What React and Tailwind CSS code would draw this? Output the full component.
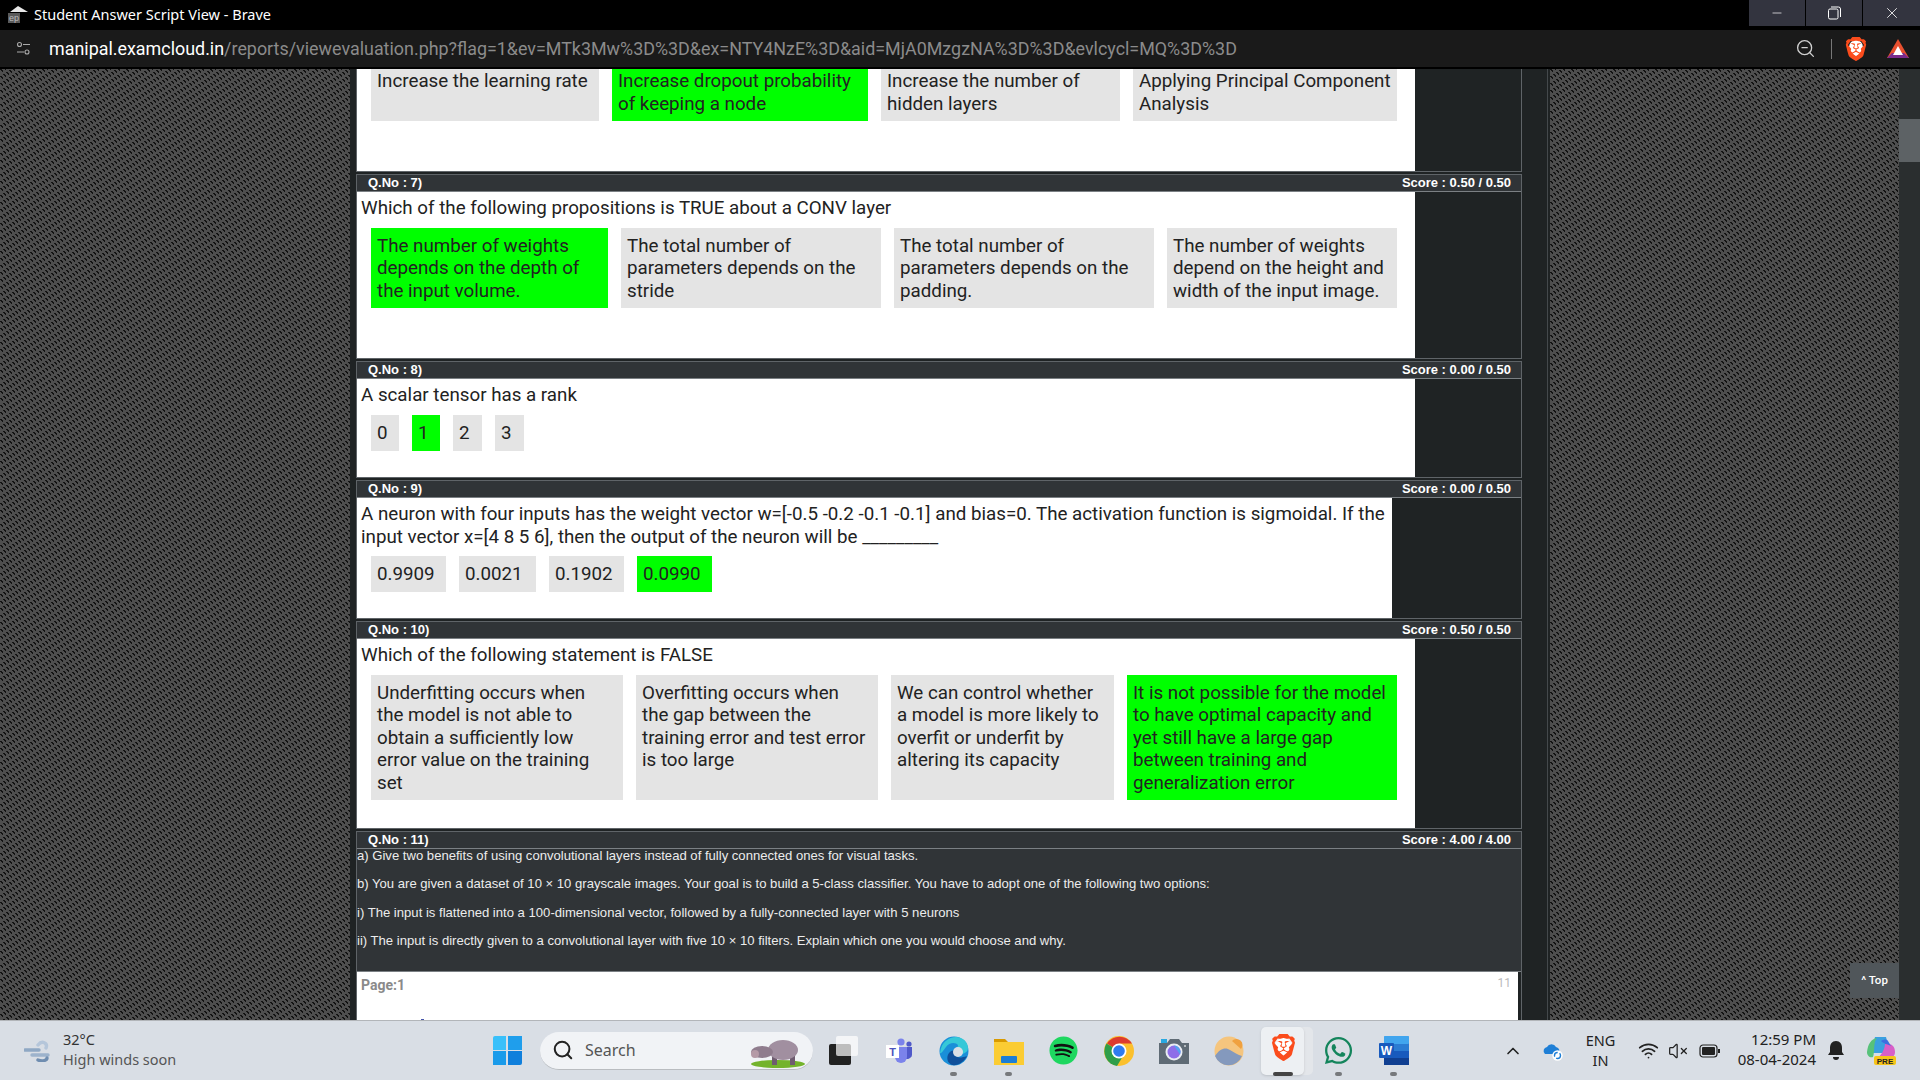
import React from 'react'
import { Search, ChevronUp, Wifi, VolumeX, ZoomOut, Minus, X } from 'lucide-react'
import { FaSpotify, FaWhatsapp } from 'react-icons/fa'
import { SiBrave } from 'react-icons/si'

// short dark dashes repeated on a skewed lattice, gives the woven page background
const DASH = [[0, 0], [1, 0], [1, 1], [2, 1], [2, 2]]
const TILE = []
for (let i = 0; i < 21; i++) {
  const ox = i * 3
  const oy = i * -2 + (i % 3) * 7
  DASH.forEach(([x, y]) => TILE.push([(ox + x) % 21, (((oy + y) % 21) + 21) % 21]))
}

function Weave({ id }) {
  return (
    <svg className="block w-full h-full">
      <defs>
        <pattern id={id} width="21" height="21" patternUnits="userSpaceOnUse">
          <rect width="21" height="21" fill="#4e4e4e" />
          {TILE.map(([x, y], i) => (
            <rect key={i} x={x} y={y} width="1" height="1" fill="#121212" />
          ))}
        </pattern>
      </defs>
      <rect width="100%" height="100%" fill={`url(#${id})`} />
    </svg>
  )
}

function BraveIcon({ size }) {
  return (
    <span className="relative inline-flex items-center justify-center" style={{ width: size, height: size }}>
      <span className="absolute left-[20%] right-[20%] top-[15%] bottom-[20%] bg-white rounded-full" />
      <SiBrave className="relative" color="#fb4c1c" size={size} />
    </span>
  )
}

function BatIcon() {
  return (
    <svg width="24" height="22" viewBox="0 0 24 22">
      <polygon points="12,1 23,20 1,20" fill="#e8502f" />
      <polygon points="1,20 23,20 18,15 6,15" fill="#7a2b8c" />
      <polygon points="12,8 17,17 7,17" fill="#fff" />
    </svg>
  )
}

function Option({ w, h = 'h-[80px]', on, children, cls = 'px-[6px] pt-[7px]' }) {
  return (
    <div className={`${w} ${h} ${cls} shrink-0 ${on ? 'bg-[#00ff00]' : 'bg-[#e4e4e4]'} text-[#222]`}>{children}</div>
  )
}

function Section({ q, score, white = 'w-[1058px]', body, children }) {
  return (
    <div className="mt-[2px] border border-[#5f6468]">
      <div className="h-[16px] bg-[#303437] flex items-center justify-between pl-[11px] pr-[10px] text-[13px] font-bold text-white font-['Liberation_Sans',sans-serif]">
        <span>Q.No : {q})</span>
        <span>{score}</span>
      </div>
      <div className="h-px bg-[#7b8084]" />
      <div className={`${white} ${body} bg-white pt-[5px]`}>{children}</div>
    </div>
  )
}

function Prompt({ children }) {
  return <div className="px-[4px] text-[#222]">{children}</div>
}

function Row({ children }) {
  return <div className="flex gap-[13px] pl-[14px] mt-[8px]">{children}</div>
}

function TaskItem({ dot, children }) {
  return (
    <div className="relative w-[55px] h-[48px] flex items-center justify-center shrink-0">
      {children}
      {dot && <span className="absolute bottom-[-1px] left-[24px] w-[7px] h-[4px] rounded-full bg-[#77797c]" />}
    </div>
  )
}

function Taskbar() {
  return (
    <div className="h-[60px] shrink-0 border-t border-[#b2b5b9] bg-[#d9dee5] flex items-center font-['Noto_Sans',sans-serif] text-[#222]">
      <div className="w-[484px] pl-[24px] flex items-center shrink-0">
        <svg width="28" height="22" viewBox="0 0 28 22" fill="none" strokeLinecap="round" strokeWidth="3.4">
          <path d="M1 10h14" stroke="#8fa8c4" />
          <path d="M8 15h16" stroke="#9db3cc" />
          <path d="M14 5c4-5 10-2 8 3" stroke="#b5c6da" />
          <path d="M14 20c5 2 9 0 9-2" stroke="#6f8db0" />
        </svg>
        <div className="ml-[11px] -mt-[4px] text-[14.5px] leading-[20px] text-[#333]">
          <div>32°C</div>
          <div className="text-[#555]">High winds soon</div>
        </div>
      </div>
      <div className="w-[46px] flex justify-center shrink-0">
        <div className="grid grid-cols-2 gap-[1.5px] w-[29px] h-[29px]">
          <span className="bg-[#39c0fa] rounded-tl-[2px]" />
          <span className="bg-[#1f9eec]" />
          <span className="bg-[#1a9bea]" />
          <span className="bg-[#0f7fdc] rounded-br-[2px]" />
        </div>
      </div>
      <div className="relative ml-[10px] w-[273px] h-[38px] shrink-0 rounded-full bg-[#f1f3f6] border-b border-[#b9bcc0] flex items-center pl-[12px]">
        <Search size={22} strokeWidth={2.2} className="text-[#222]" />
        <span className="ml-[11px] text-[16px] text-[#555]">Search</span>
        <svg className="absolute right-[7px] top-[6px]" width="56" height="30" viewBox="0 0 56 30">
          <ellipse cx="28" cy="26" rx="27" ry="4" fill="#74b32c" />
          <rect x="22" y="17" width="5" height="10" fill="#6f5c70" />
          <rect x="40" y="17" width="5" height="10" fill="#6f5c70" />
          <ellipse cx="33" cy="12" rx="15" ry="10" fill="#a18fa0" />
          <ellipse cx="12" cy="14" rx="11" ry="6" fill="#8f7c8d" />
          <circle cx="5" cy="16" r="4" fill="#b59aa6" />
        </svg>
      </div>
      <div className="ml-[3px] flex items-center shrink-0">
        <TaskItem>
          <span className="relative w-[29px] h-[29px]">
            <span className="absolute left-0 bottom-0 w-[22px] h-[21px] bg-[#222] rounded-[2px]" />
            <span className="absolute right-0 top-0 w-[22px] h-[20px] bg-white/70 rounded-[2px]" />
          </span>
        </TaskItem>
        <TaskItem>
          <svg width="28" height="26" viewBox="0 0 28 26">
            <circle cx="16" cy="4" r="3.6" fill="#7b83eb" />
            <circle cx="24" cy="6" r="2.6" fill="#5059c9" />
            <path d="M19 9h8v8a5 5 0 0 1-8 3z" fill="#5059c9" />
            <path d="M10 9h12v10a6 6 0 0 1-12 0z" fill="#7b83eb" />
            <rect x="1" y="7" width="13" height="13" fill="#fff" />
            <text x="7.5" y="17.5" fontSize="11" fontWeight="700" textAnchor="middle" fill="#4b53bc" fontFamily="Liberation Sans">T</text>
          </svg>
        </TaskItem>
        <TaskItem dot>
          <svg width="30" height="30" viewBox="0 0 30 30">
            <circle cx="15" cy="15" r="14.5" fill="#1a8fd8" />
            <path d="M1 17C2 6 10 1 17 1c7 0 12 5 12 11 0 4-4 6-8 6-3 0-5-1-5-3 0-3 3-3 3-6-2-3-9-3-12 2-3 4-5 7-6 6z" fill="#36c8d8" />
            <path d="M13 29c-5-2-6-8-3-12 2-3 5-3 6-2-2 4 1 9 12 5-3 6-9 10-15 9z" fill="#0f4f9a" />
            <circle cx="19" cy="16" r="5" fill="#d9dee5" />
          </svg>
        </TaskItem>
        <TaskItem dot>
          <svg width="30" height="28" viewBox="0 0 30 28">
            <path d="M0 2h11l3 3h-14z" fill="#d99a00" />
            <rect x="0" y="5" width="30" height="23" fill="#ffd23f" />
            <rect x="0" y="5" width="30" height="23" fill="#f9c82b" opacity="0.6" />
            <rect x="7" y="19" width="16" height="7" rx="1" fill="#1c7ed6" />
          </svg>
        </TaskItem>
        <TaskItem>
          <span className="relative flex items-center justify-center w-[29px] h-[29px]">
            <span className="absolute inset-[3px] rounded-full bg-[#111]" />
            <FaSpotify className="relative" size={29} color="#1ed760" />
          </span>
        </TaskItem>
        <TaskItem>
          <svg width="30" height="30" viewBox="0 0 30 30">
            <circle cx="15" cy="15" r="15" fill="#fbc02d" />
            <path d="M15 15L3 7.5A15 15 0 0 1 28 7.5H15z" fill="#dd3b2f" />
            <path d="M15 15L2.5 7.5A15 15 0 0 0 13 30l6-10z" fill="#2f9e4a" />
            <circle cx="15" cy="15" r="7.5" fill="#fff" />
            <circle cx="15" cy="15" r="5.8" fill="#2f7bf0" />
          </svg>
        </TaskItem>
        <TaskItem>
          <svg width="30" height="26" viewBox="0 0 30 26">
            <rect x="2" y="1" width="6" height="4" fill="#29a8e0" />
            <path d="M0 5h8l3-4h9l3 4h7v21H0z" fill="#5f6b75" />
            <circle cx="15" cy="14" r="8.5" fill="#e9edf2" />
            <circle cx="15" cy="14" r="6.5" fill="#8e6ee8" />
            <path d="M15 7.5a6.5 6.5 0 0 1 6 9z" fill="#52a3f0" />
            <circle cx="26" cy="8" r="1" fill="#cfd4d9" />
          </svg>
        </TaskItem>
        <TaskItem>
          <svg width="30" height="30" viewBox="0 0 30 30">
            <circle cx="15" cy="15" r="14.5" fill="#f5c57e" />
            <path d="M18 5a5 5 0 0 1 9 8z" fill="#f0a13f" />
            <path d="M1 20c5-8 11-9 15-6 4 2 8 5 12 6a14.5 14.5 0 0 1-27 0z" fill="#8499bd" />
          </svg>
        </TaskItem>
        <TaskItem>
          <span className="absolute left-[9px] top-0 w-[48px] h-[48px] rounded-[5px] bg-[#e3e6ea]" />
          <span className="absolute left-[5px] top-0 w-[43px] h-[48px] rounded-[5px] bg-[#edf0f3] shadow-sm" />
          <span className="relative">
            <BraveIcon size={27} />
          </span>
          <span className="absolute bottom-[-1px] left-[17px] w-[20px] h-[4px] rounded-full bg-[#444]" />
        </TaskItem>
        <TaskItem dot>
          <FaWhatsapp size={31} color="#14855c" />
        </TaskItem>
        <TaskItem dot>
          <svg width="30" height="29" viewBox="0 0 30 29">
            <rect x="5" y="0" width="25" height="29" rx="2" fill="#2b7cd3" />
            <rect x="5" y="0" width="25" height="8" rx="1" fill="#41a5ee" />
            <rect x="5" y="15" width="25" height="7" fill="#185abd" />
            <rect x="5" y="22" width="25" height="7" fill="#103f91" />
            <rect x="0" y="7" width="15" height="15" rx="1" fill="#185abd" />
            <text x="7.5" y="19" fontSize="12" fontWeight="700" textAnchor="middle" fill="#fff" fontFamily="Liberation Sans">W</text>
          </svg>
        </TaskItem>
      </div>
      <ChevronUp size={20} strokeWidth={2} className="ml-[82px] shrink-0" />
      <svg className="ml-[20px] shrink-0" width="20" height="20" viewBox="0 0 20 20">
        <path d="M2 13a4 4 0 0 1 2-7 5 5 0 0 1 9 0 4 4 0 0 1 2 7z" fill="#1f7fd6" />
        <circle cx="14.5" cy="14.5" r="5.2" fill="#fff" />
        <circle cx="14.5" cy="14.5" r="3" fill="none" stroke="#1f7fd6" strokeWidth="1.4" strokeDasharray="6 2" />
      </svg>
      <div className="ml-[23px] -mt-[2px] w-[29px] shrink-0 text-center text-[14.5px] leading-[20px] flex flex-col items-center">
        <div>ENG</div>
        <div>IN</div>
      </div>
      <Wifi size={21} className="ml-[23px] shrink-0" />
      <VolumeX size={20} strokeWidth={1.5} className="ml-[9px] shrink-0" />
      <svg className="ml-[11px] shrink-0" width="21" height="14" viewBox="0 0 21 14">
        <rect x="1" y="1" width="17" height="12" rx="3" fill="none" stroke="#222" strokeWidth="1.2" />
        <rect x="3" y="3" width="13" height="8" rx="1" fill="#222" />
        <rect x="19" y="5" width="2" height="4" fill="#222" />
      </svg>
      <div className="w-[96px] -mt-[4px] shrink-0 text-right text-[15px] leading-[20px]">
        <div>12:59 PM</div>
        <div>08-04-2024</div>
      </div>
      <svg className="ml-[12px] shrink-0" width="16" height="20" viewBox="0 0 16 20">
        <path d="M8 0c4 0 6 3 6 7v4l2 3H0l2-3V7c0-4 2-7 6-7z" fill="#222" />
        <path d="M5 16h6a3 3 0 0 1-6 0z" fill="#222" />
      </svg>
      <svg className="ml-[23px] shrink-0" width="30" height="30" viewBox="0 0 30 30">
        <path d="M8 1h11l4 16H4z" fill="#3aa0e0" />
        <path d="M0 16C1 8 4 3 10 2c-4 4-2 14-4 19-3 1-6-1-6-5z" fill="#57c27a" />
        <path d="M18 8c5-1 10 1 10 8 0 4-3 6-7 6H10c4-2 8-9 8-14z" fill="#d75fc8" />
        <path d="M14 5c3-2 6-2 7 0l3 5c-4-2-7-2-10-5z" fill="#3c6fe0" />
        <rect x="7" y="20" width="22" height="9" rx="2" fill="#f5c518" />
        <text x="18" y="27.5" fontSize="8" fontWeight="700" textAnchor="middle" fill="#222" fontFamily="Liberation Sans">PRE</text>
      </svg>
    </div>
  )
}

export default function App() {
  return (
    <div className="w-[1920px] h-[1080px] overflow-hidden flex flex-col bg-black font-['Roboto',sans-serif]">
      {/* title bar */}
      <div className="h-[30px] shrink-0 bg-black flex items-start text-white">
        <div className="flex items-center h-[30px] pl-[8px] flex-1">
          <svg width="20" height="18" viewBox="0 0 20 18">
            <polygon points="10,0 20,6 2,6" fill="#e8e8e8" />
            <rect x="0" y="7" width="12" height="10" fill="#5a5a5a" />
            <text x="6" y="15" fontSize="9" textAnchor="middle" fill="#bbb" fontFamily="Liberation Sans">ep</text>
          </svg>
          <span className="ml-[6px] text-[14.5px] font-['Noto_Sans',sans-serif]">Student Answer Script View - Brave</span>
        </div>
        <div className="flex h-[26px] bg-[#33343f]">
          <div className="w-[56px] flex items-center justify-center"><Minus size={14} strokeWidth={1.2} /></div>
          <div className="w-px bg-black" />
          <div className="w-[56px] flex items-center justify-center">
            <svg width="13" height="14" viewBox="0 0 13 14" fill="none" stroke="#fff" strokeWidth="1">
              <rect x="0.5" y="3" width="9.5" height="10" rx="1.5" />
              <path d="M3 1h7.5a2 2 0 0 1 2 2v8" />
            </svg>
          </div>
          <div className="w-px bg-black" />
          <div className="w-[57px] flex items-center justify-center"><X size={18} strokeWidth={1.1} /></div>
        </div>
      </div>
      {/* address bar */}
      <div className="h-[37px] shrink-0 bg-[#1a1a1a] flex items-center border-b-0">
        <svg className="ml-[16px]" width="15" height="15" viewBox="0 0 15 15" fill="none" stroke="#aaa" strokeWidth="1.1">
          <circle cx="3.5" cy="3.5" r="2" />
          <path d="M7 3.5h7M1 11h7" />
          <circle cx="11" cy="11" r="2" />
        </svg>
        <div className="ml-[18px] flex-1 pt-[1px] text-[17.9px] text-[#8b8b8b]">
          <span className="text-white">manipal.examcloud.in</span>/reports/viewevaluation.php?flag=1&amp;ev=MTk3Mw%3D%3D&amp;ex=NTY4NzE%3D&amp;aid=MjA0MzgzNA%3D%3D&amp;evlcycl=MQ%3D%3D
        </div>
        <ZoomOut size={21} strokeWidth={1.5} className="text-[#d0d0d0]" />
        <div className="w-px h-[20px] bg-[#777] ml-[15px]" />
        <span className="ml-[12px] flex"><BraveIcon size={24} /></span>
        <span className="ml-[18px] mr-[10px] flex"><BatIcon /></span>
      </div>
      <div className="h-[2px] shrink-0 bg-black" />

      {/* page */}
      <div className="flex-1 min-h-0 flex text-[18.75px] leading-[22.5px]">
        <div className="w-[350px] shrink-0"><Weave id="weave-left" /></div>
        <div className="w-[1200px] shrink-0 bg-[#1f2324] pl-[6px] overflow-hidden">
          <div className="w-[1192px] h-full border-r border-[#44494c]">
            <div className="w-[1166px] border border-t-0 border-[#5f6468]">
              <div className="w-[1058px] h-[102px] bg-white">
                <div className="flex gap-[13px] pl-[14px]">
                  <Option w="w-[228px]" h="h-[52px]" cls="px-[6px] pt-[1px]">Increase the learning rate</Option>
                  <Option w="w-[256px]" h="h-[52px]" cls="px-[6px] pt-[1px]" on>Increase dropout probability of keeping a node</Option>
                  <Option w="w-[239px]" h="h-[52px]" cls="px-[6px] pt-[1px]">Increase the number of hidden layers</Option>
                  <Option w="w-[264px]" h="h-[52px]" cls="px-[6px] pt-[1px]">Applying Principal Component Analysis</Option>
                </div>
              </div>
            </div>

            <div className="w-[1166px] flex flex-col">
              <Section q="7" score="Score : 0.50 / 0.50" body="h-[166px]">
                <Prompt>Which of the following propositions is TRUE about a CONV layer</Prompt>
                <Row>
                  <Option w="w-[237px]" on>The number of weights depends on the depth of the input volume.</Option>
                  <Option w="w-[260px]">The total number of parameters depends on the stride</Option>
                  <Option w="w-[260px]">The total number of parameters depends on the padding.</Option>
                  <Option w="w-[230px]">The number of weights depend on the height and width of the input image.</Option>
                </Row>
              </Section>
              <Section q="8" score="Score : 0.00 / 0.50" body="h-[98px]">
                <Prompt>A scalar tensor has a rank</Prompt>
                <Row>
                  <Option w="w-[28px]" h="h-[36px]">0</Option>
                  <Option w="w-[28px]" h="h-[36px]" on>1</Option>
                  <Option w="w-[29px]" h="h-[36px]">2</Option>
                  <Option w="w-[29px]" h="h-[36px]">3</Option>
                </Row>
              </Section>
              <Section q="9" score="Score : 0.00 / 0.50" white="w-[1035px]" body="h-[120px]">
                <Prompt>A neuron with four inputs has the weight vector w=[-0.5 -0.2 -0.1 -0.1] and bias=0. The activation function is sigmoidal. If the input vector x=[4 8 5 6], then the output of the neuron will be _________</Prompt>
                <Row>
                  <Option w="w-[75px]" h="h-[36px]">0.9909</Option>
                  <Option w="w-[77px]" h="h-[36px]">0.0021</Option>
                  <Option w="w-[75px]" h="h-[36px]">0.1902</Option>
                  <Option w="w-[75px]" h="h-[36px]" on>0.0990</Option>
                </Row>
              </Section>
              <Section q="10" score="Score : 0.50 / 0.50" body="h-[189px]">
                <Prompt>Which of the following statement is FALSE</Prompt>
                <Row>
                  <Option w="w-[252px]" h="h-[125px]">Underfitting occurs when<br />the model is not able to<br />obtain a sufficiently low<br />error value on the training<br />set</Option>
                  <Option w="w-[242px]" h="h-[125px]">Overfitting occurs when<br />the gap between the<br />training error and test error<br />is too large</Option>
                  <Option w="w-[223px]" h="h-[125px]">We can control whether<br />a model is more likely to<br />overfit or underfit by<br />altering its capacity</Option>
                  <Option w="w-[270px]" h="h-[125px]" on>It is not possible for the model to have optimal capacity and yet still have a large gap between training and generalization error</Option>
                </Row>
              </Section>
              <div className="mt-[2px] border border-b-0 border-[#5f6468]">
                <div className="h-[16px] bg-[#303437] flex items-center justify-between pl-[11px] pr-[10px] text-[13px] font-bold text-white font-['Liberation_Sans',sans-serif]">
                  <span>Q.No : 11)</span>
                  <span>Score : 4.00 / 4.00</span>
                </div>
                <div className="h-px bg-[#7b8084]" />
                <div className="h-[123px] bg-[#303437] border-b border-[#7b8084] text-[13.1px] leading-[28.4px] text-[#ececec] font-['Liberation_Sans',sans-serif] overflow-hidden">
                  <div className="-mt-[7px]">
                    <div>a) Give two benefits of using convolutional layers instead of fully connected ones for visual tasks.</div>
                    <div>b) You are given a dataset of 10 × 10 grayscale images. Your goal is to build a 5-class classifier. You have to adopt one of the following two options:</div>
                    <div>i) The input is flattened into a 100-dimensional vector, followed by a fully-connected layer with 5 neurons</div>
                    <div>ii) The input is directly given to a convolutional layer with five 10 × 10 filters. Explain which one you would choose and why.</div>
                  </div>
                </div>
                <div className="relative w-[1161px] h-[60px] bg-white">
                  <div className="absolute left-[4px] top-[2px] text-[14px] font-bold text-[#8a8a8a]">Page:1</div>
                  <div className="absolute right-[7px] top-0 text-[12px] text-[#bbb]">11</div>
                  <div className="absolute left-[64px] top-[47px] w-[3px] h-[2px] bg-[#4455aa]" />
                </div>
              </div>
            </div>
          </div>
        </div>
        <div className="relative w-[349px] shrink-0">
          <Weave id="weave-right" />
          <div className="absolute right-0 bottom-[22px] w-[49px] h-[35px] bg-[#50565a] flex items-center justify-center text-[11.5px] font-medium text-white">^ Top</div>
        </div>
        <div className="w-[21px] shrink-0 bg-[#2a2e2f] pt-[50px]">
          <div className="h-[43px] bg-[#5d6265]" />
        </div>
      </div>
      <Taskbar />
    </div>
  )
}
